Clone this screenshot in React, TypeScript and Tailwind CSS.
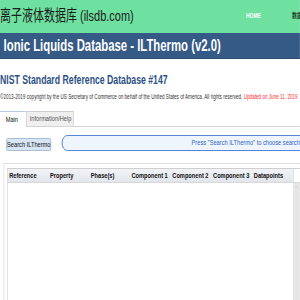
import React from 'react';

const COLUMNS = ['Reference', 'Property', 'Phase(s)', 'Component 1', 'Component 2', 'Component 3', 'Datapoints'];

export default function App() {
  return (
    <div className="w-[300px] h-[300px] overflow-hidden bg-white">
      {/* the page is drawn at 423px wide and squeezed to fit, like the screenshot */}
      <div className="w-[423px] origin-top-left scale-x-[0.709] font-['Liberation_Sans','Noto_Sans_CJK_SC',sans-serif]">
        {/* Top bar */}
        <header className="h-[33px] bg-[#6ee09f] flex items-center">
          <span className="text-[15.5px] leading-none text-[#1c1c1c] whitespace-nowrap pb-[1px]">离子液体数据库 (ilsdb.com)</span>
          <nav className="ml-auto flex items-center whitespace-nowrap">
            <a href="#" className="text-[7px] font-bold text-white uppercase">Home</a>
            <a href="#" className="ml-[44px] mr-[-10px] text-[7px] font-bold text-[#1f3b2a]">数据库</a>
          </nav>
        </header>

        {/* Blue title bar */}
        <div className="h-[26px] bg-[#355a86] border-b border-[#2b4a70] flex items-center pl-[5px]">
          <h1 className="text-[16px] font-bold text-white whitespace-nowrap leading-none">Ionic Liquids Database - ILThermo (v2.0)</h1>
        </div>

        <h2 className="mt-[14px] text-[12.3px] leading-[14px] font-bold text-[#2d5184] whitespace-nowrap">NIST Standard Reference Database #147</h2>
        <p className="mt-[6px] text-[6.5px] leading-[8px] text-[#333] whitespace-nowrap">
          ©2013-2019 copyright by the US Secretary of Commerce on behalf of the United States of America. All rights reserved.{' '}
          <span className="text-[#ff2a2a]">Updated on June 11, 2019</span>
        </p>

        {/* Tabs */}
        <div className="mt-[10px] h-[16px] flex items-end border-b border-[#d4d4d4]">
          <div className="h-[16px] w-[36px] bg-white border-t border-[#b9cbe4] pl-[8px] text-[8px] leading-[15px] text-[#111] mb-[-1px]">Main</div>
          <div className="h-[15px] w-[67px] ml-[1px] bg-[#efefef] border border-b-0 border-[#cfcfcf] pl-[4px] text-[8px] leading-[14px] text-[#555]">Information/Help</div>
        </div>

        {/* Toolbar */}
        <div className="pt-[8px] flex items-end whitespace-nowrap">
          <button className="ml-[9px] w-[72px] h-[13px] bg-[#d7e5f4] border border-[#9fb4cf] rounded-[2px] text-[8px] leading-none text-[#111]">Search ILThermo</button>
          <div className="ml-[15px] w-[400px] shrink-0 h-[16px] bg-[#eef5fd] border-[1.5px] border-[#3b6fcf] rounded-[8px] pl-[182px] text-[8px] leading-[13px] text-[#2f63c4]">
            Press "Search ILThermo" to choose search criteria
          </div>
        </div>

        {/* Results panel */}
        <div className="mt-[12px] ml-[5px] h-[140px] border-t border-l border-[#dcdcdc] pt-[4px] pl-[4px]">
          <div className="h-full border-l border-t border-[#cfcfcf] flex flex-col">
            <div className="h-[14px] flex border-b border-[#d8d8d8]">
              <div className="w-[402px] flex bg-gradient-to-b from-[#f1f3f6] to-[#e2e6ec] pl-[2px]">
                {COLUMNS.map((c) => (
                  <div key={c} className="w-[57.5px] shrink-0 text-[8px] font-bold leading-[14px] text-[#111] whitespace-nowrap">{c}</div>
                ))}
              </div>
              <div className="w-[10px] border-l border-[#d0d0d0] bg-white" />
            </div>
            <div className="flex-1 flex">
              <div className="w-[402px] bg-white" />
              <div className="w-[10px] bg-[#e6e6e6] flex justify-center">
                <span className="text-[6px] leading-[10px] text-[#b8b8b8]">^</span>
              </div>
            </div>
          </div>
        </div>
      </div>
    </div>
  );
}
